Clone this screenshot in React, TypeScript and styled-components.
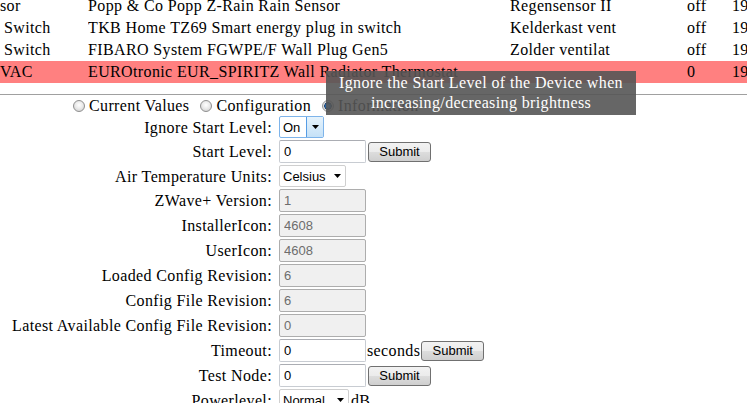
import React from "react";
import styled, { createGlobalStyle, css } from "styled-components";

const GlobalStyle = createGlobalStyle`
  html, body { margin: 0; padding: 0; background: #fff; }
  body {
    font-family: "Liberation Serif", "Times New Roman", serif;
    font-size: 16px;
    letter-spacing: 0.37px;
    color: #000;
    overflow: hidden;
  }
`;

const Page = styled.div`
  position: relative;
  width: 747px;
  height: 403px;
  overflow: hidden;
`;

const DeviceList = styled.div`
  display: flex;
  flex-direction: column;
  margin-top: -5px;
`;

const DeviceRow = styled.div<{ $active?: boolean }>`
  display: grid;
  grid-template-columns: 88px 422px 177px 45px 1fr;
  height: 22px;
  align-items: center;
  white-space: nowrap;
  background: ${(p) => (p.$active ? "#ff8080" : "transparent")};
`;

const Cell = styled.div<{ $indent?: number }>`
  padding-left: ${(p) => p.$indent ?? 0}px;
  overflow: hidden;
`;

const Rule = styled.hr`
  margin: 11px 0 0;
  height: 0;
  border: 0;
  border-top: 1px solid #a0a0a0;
`;

const Tabs = styled.div`
  display: flex;
  align-items: center;
  height: 21px;
  padding-left: 73px;
  white-space: nowrap;
`;

const Radio = styled.span<{ $checked?: boolean }>`
  box-sizing: border-box;
  flex: none;
  width: 12px;
  height: 12px;
  border-radius: 50%;
  border: 1px solid #8f8f8f;
  margin-right: 4px;
  background: ${(p) =>
    p.$checked
      ? "radial-gradient(circle at 50% 50%, #7fb8ec 0, #2f78c6 2px, #173f6e 3.5px, #d8d8d8 4px, #f4f4f4 100%)"
      : "radial-gradient(circle at 50% 40%, #ffffff 0%, #ebebeb 45%, #c9c9c9 100%)"};
`;

const TabLabel = styled.span`
  margin-right: 11px;
`;

const Settings = styled.div`
  display: grid;
  grid-template-columns: 272px auto;
  column-gap: 7px;
  row-gap: 2px;
  align-items: center;
  justify-content: start;
`;

const FieldLabel = styled.div`
  text-align: right;
  white-space: nowrap;
  line-height: 19px;
`;

const FieldValue = styled.div`
  display: flex;
  align-items: center;
  white-space: nowrap;
`;

const controlFont = css`
  font-family: "Liberation Sans", Arial, sans-serif;
  font-size: 13px;
  letter-spacing: 0;
  color: #000;
`;

const TextBox = styled.input`
  ${controlFont};
  box-sizing: border-box;
  width: 87px;
  height: 23px;
  margin: 0;
  padding: 0 4px;
  border: 1px solid #c8ccd2;
  border-top-color: #abadb3;
  border-radius: 2px;
  background: #fff;
  outline: none;
  &:disabled {
    background: #f0f0f0;
    color: #6d6d6d;
    border-color: #adadad;
    opacity: 1;
  }
`;

const SubmitButton = styled.button<{ $gap?: number }>`
  ${controlFont};
  box-sizing: border-box;
  width: 63px;
  height: 20px;
  margin: 0 0 0 ${(p) => p.$gap ?? 2}px;
  padding: 0;
  border: 1px solid #707070;
  border-radius: 3px;
  background: linear-gradient(#f2f2f2 0%, #ebebeb 50%, #dddddd 50%, #cfcfcf 100%);
`;

const DropDown = styled.div<{ $width: number; $focused?: boolean }>`
  ${controlFont};
  box-sizing: border-box;
  display: flex;
  align-items: stretch;
  width: ${(p) => p.$width}px;
  height: 22px;
  border: 1px solid ${(p) => (p.$focused ? "#7eb4ea" : "#cfcfcf")};
  border-radius: 2px;
  background: #fff;
`;

const DropText = styled.span`
  flex: 1;
  display: flex;
  align-items: center;
  padding-left: 3px;
`;

const DropArrow = styled.span<{ $focused?: boolean }>`
  flex: none;
  width: 16px;
  display: flex;
  align-items: center;
  justify-content: center;
  ${(p) =>
    p.$focused &&
    css`
      background: linear-gradient(#e6f3fc, #c5e1f7);
      border-left: 1px solid #569de5;
    `}
`;

const Unit = styled.span<{ $gap?: number }>`
  margin-left: ${(p) => p.$gap ?? 0}px;
  line-height: 19px;
`;

const Tooltip = styled.div`
  position: absolute;
  left: 326px;
  top: 71px;
  box-sizing: border-box;
  width: 310px;
  height: 44px;
  padding: 2px 0;
  background: rgba(85, 85, 85, 0.9);
  color: #fff;
  text-align: center;
  line-height: 20px;
`;

const Caret = () => (
  <svg width="7" height="4" viewBox="0 0 7 4">
    <path d="M0 0h7L3.5 4z" fill="#000" />
  </svg>
);

type Device = { type: string; indent?: number; product: string; name: string; state: string; time: string; active?: boolean };

const devices: Device[] = [
  { type: "sor", product: "Popp & Co Popp Z-Rain Rain Sensor", name: "Regensensor II", state: "off", time: "19" },
  { type: "Switch", indent: 4, product: "TKB Home TZ69 Smart energy plug in switch", name: "Kelderkast vent", state: "off", time: "19" },
  { type: "Switch", indent: 4, product: "FIBARO System FGWPE/F Wall Plug Gen5", name: "Zolder ventilat", state: "off", time: "19" },
  { type: "VAC", product: "EUROtronic EUR_SPIRITZ Wall Radiator Thermostat", name: "", state: "0", time: "19", active: true },
];

const Select = ({ value, width, focused }: { value: string; width: number; focused?: boolean }) => (
  <DropDown $width={width} $focused={focused}>
    <DropText>{value}</DropText>
    <DropArrow $focused={focused}>
      <Caret />
    </DropArrow>
  </DropDown>
);

export default function App() {
  return (
    <Page>
      <GlobalStyle />
      <DeviceList>
        {devices.map((d, i) => (
          <DeviceRow key={i} $active={d.active}>
            <Cell $indent={d.indent}>{d.type}</Cell>
            <Cell>{d.product}</Cell>
            <Cell>{d.name}</Cell>
            <Cell>{d.state}</Cell>
            <Cell>{d.time}</Cell>
          </DeviceRow>
        ))}
      </DeviceList>
      <Rule />
      <Tabs>
        <Radio />
        <TabLabel>Current Values</TabLabel>
        <Radio />
        <TabLabel>Configuration</TabLabel>
        <Radio $checked />
        <TabLabel>Information</TabLabel>
      </Tabs>
      <Settings>
        <FieldLabel>Ignore Start Level:</FieldLabel>
        <FieldValue>
          <Select value="On" width={45} focused />
        </FieldValue>

        <FieldLabel>Start Level:</FieldLabel>
        <FieldValue>
          <TextBox defaultValue="0" />
          <SubmitButton>Submit</SubmitButton>
        </FieldValue>

        <FieldLabel>Air Temperature Units:</FieldLabel>
        <FieldValue>
          <Select value="Celsius" width={67} />
        </FieldValue>

        <FieldLabel>ZWave+ Version:</FieldLabel>
        <FieldValue>
          <TextBox disabled defaultValue="1" />
        </FieldValue>

        <FieldLabel>InstallerIcon:</FieldLabel>
        <FieldValue>
          <TextBox disabled defaultValue="4608" />
        </FieldValue>

        <FieldLabel>UserIcon:</FieldLabel>
        <FieldValue>
          <TextBox disabled defaultValue="4608" />
        </FieldValue>

        <FieldLabel>Loaded Config Revision:</FieldLabel>
        <FieldValue>
          <TextBox disabled defaultValue="6" />
        </FieldValue>

        <FieldLabel>Config File Revision:</FieldLabel>
        <FieldValue>
          <TextBox disabled defaultValue="6" />
        </FieldValue>

        <FieldLabel>Latest Available Config File Revision:</FieldLabel>
        <FieldValue>
          <TextBox disabled defaultValue="0" />
        </FieldValue>

        <FieldLabel>Timeout:</FieldLabel>
        <FieldValue>
          <TextBox defaultValue="0" />
          <Unit $gap={1}>seconds</Unit>
          <SubmitButton $gap={1}>Submit</SubmitButton>
        </FieldValue>

        <FieldLabel>Test Node:</FieldLabel>
        <FieldValue>
          <TextBox defaultValue="0" />
          <SubmitButton>Submit</SubmitButton>
        </FieldValue>

        <FieldLabel>Powerlevel:</FieldLabel>
        <FieldValue>
          <Select value="Normal" width={70} />
          <Unit $gap={2}>dB</Unit>
        </FieldValue>
      </Settings>
      <Tooltip>
        Ignore the Start Level of the Device when
        <br />
        increasing/decreasing brightness
      </Tooltip>
    </Page>
  );
}
